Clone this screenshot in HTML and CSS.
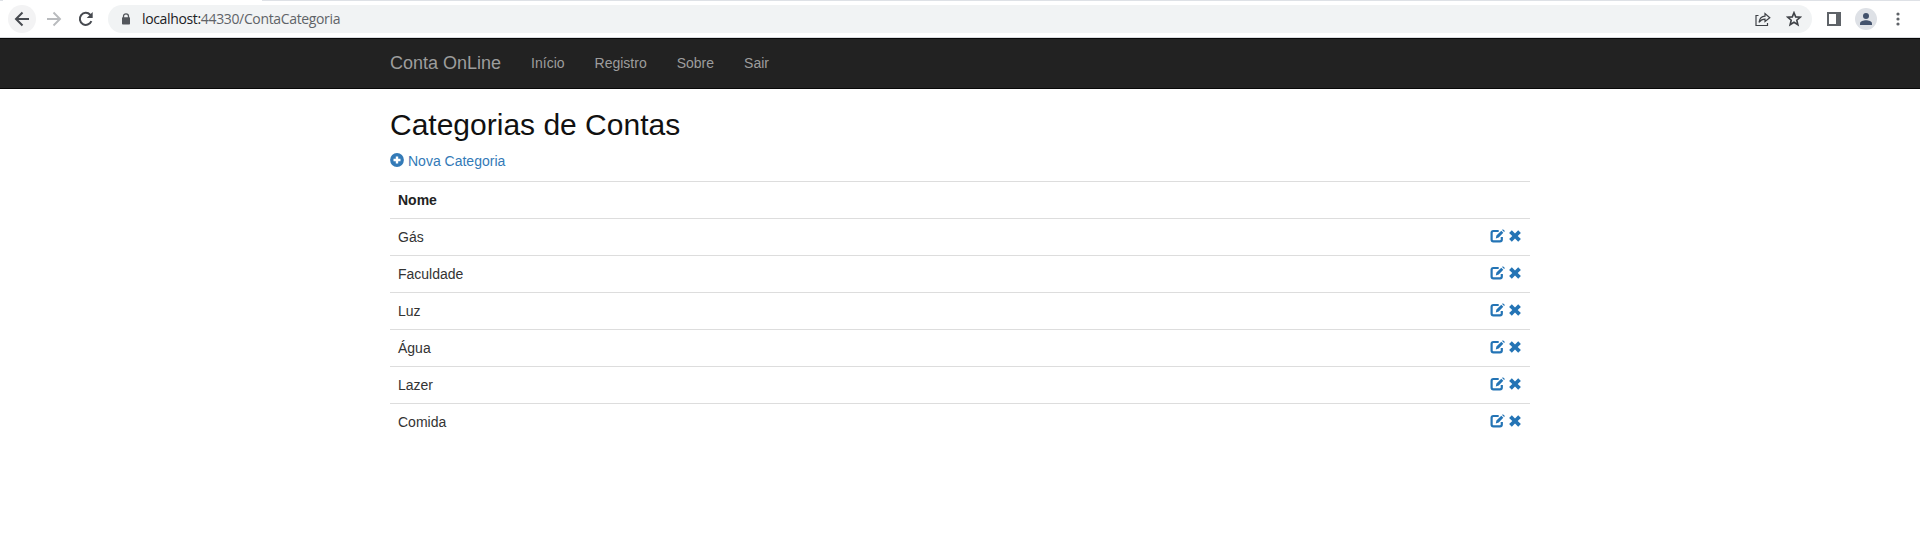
FILE: index.html
```html
<!DOCTYPE html>
<html lang="pt-BR">
<head>
<meta charset="utf-8">
<title>Categorias de Contas</title>
<link rel="stylesheet" href="styles.css">
</head>
<body>
<svg class="symbols" width="0" height="0">
  <symbol id="edit" viewBox="0 0 16 14">
    <path d="M8.700 2H3.400Q1.600 2 1.600 3.800V10.500Q1.600 12.300 3.400 12.300H10Q11.800 12.300 11.800 10.500V8" fill="none" stroke="currentColor" stroke-width="2.200"/>
    <path d="M5.800 9.500 6.400 6.600 11.300 1.700 13.300 3.700 8.700 8.500ZM12.100 1 12.900.2 14.900 2.100 14.100 3Z" fill="currentColor"/>
  </symbol>
  <symbol id="remove" viewBox="0 0 12 12">
    <path d="M2.800.3 6 3.400 9.200.3 11.900 2.900 8.700 6 11.900 9.100 9.200 11.700 6 8.600 2.800 11.700.1 9.100 3.300 6 .1 2.900Z" fill="currentColor"/>
  </symbol>
</svg>
<header class="browser">
  <div class="tab-strip"><span class="active-tab"></span></div>
  <div class="toolbar">
    <span class="back"><svg width="16" height="16" viewBox="0 0 16 16"><path d="M15 8H2.500M8.500 1.500 2 8l6.500 6.500" fill="none" stroke="#474a50" stroke-width="2"/></svg></span>
    <svg class="forward" width="16" height="16" viewBox="0 0 16 16"><path d="M1 8h12.500M7.500 1.500 14 8l-6.500 6.500" fill="none" stroke="#b9bbbe" stroke-width="1.900"/></svg>
    <svg class="reload" width="16" height="16" viewBox="0 0 16 16"><path d="M13.400 10.200A6 6 0 1 1 12.200 3.700L13.200 4.800" fill="none" stroke="#474a50" stroke-width="2"/><path d="M14.700 1v6H8.700Z" fill="#474a50"/></svg>
    <div class="address">
      <svg class="lock" width="10" height="12" viewBox="0 0 10 12"><path d="M2.500 5V3.300a2.500 2.500 0 0 1 5 0V5" fill="none" stroke="#54575c" stroke-width="1.300"/><rect x="1" y="4.300" width="8" height="7.200" rx=".8" fill="#54575c"/></svg>
      <span class="url"><b>localhost:</b>44330/ContaCategoria</span>
      <svg class="share" width="16" height="14" viewBox="0 0 16 14"><path d="M3.500 3.500H1v10h11.500V11M4 10.300C4.500 6.800 6.600 4.300 10 4.100V1.500L14.800 5.700 10 9.500V7.200C7.300 7.200 5.500 8.300 4 10.300Z" fill="none" stroke="#3f4247" stroke-width="1.200"/></svg>
      <svg class="star" width="16" height="16" viewBox="0 0 16 16"><path d="m8 1.700 1.700 4.200 4.600.3-3.500 3 1.100 4.500L8 11.300l-3.900 2.400 1.100-4.500-3.500-3 4.600-.3Z" fill="none" stroke="#3f4247" stroke-width="1.600"/></svg>
    </div>
    <svg class="panel" width="14" height="14" viewBox="0 0 14 14"><path d="M1 1h12v12H1Z" fill="none" stroke="#5f6368" stroke-width="2"/><path d="M9 1h4v12H9Z" fill="#5f6368"/></svg>
    <span class="profile"><svg width="12" height="12" viewBox="0 0 12 12"><circle cx="6" cy="3" r="3" fill="#43526c"/><path d="M0 12v-1.500C0 8.300 3.500 7.300 6 7.300s6 1 6 3.200V12Z" fill="#43526c"/></svg></span>
    <svg class="menu" width="4" height="14" viewBox="0 0 4 14"><g fill="#5f6368"><circle cx="2" cy="2" r="1.600"/><circle cx="2" cy="7" r="1.600"/><circle cx="2" cy="12" r="1.600"/></g></svg>
  </div>
</header>
<nav class="navbar">
  <div class="container nav-row">
    <a class="brand">Conta OnLine</a>
    <a>Início</a><a>Registro</a><a>Sobre</a><a>Sair</a>
  </div>
</nav>
<main class="container">
  <h2>Categorias de Contas</h2>
  <p class="create"><svg width="14" height="14" viewBox="0 0 14 14"><circle cx="7" cy="7" r="6.900" fill="currentColor"/><path d="M7 3.500v7M3.500 7h7" stroke="#fff" stroke-width="2.400"/></svg><a>Nova Categoria</a></p>
  <table>
    <tr><th>Nome</th><th></th></tr>
    <tr><td>Gás</td><td class="actions"><div><svg class="edit"><use href="#edit"/></svg><svg class="remove"><use href="#remove"/></svg></div></td></tr>
    <tr><td>Faculdade</td><td class="actions"><div><svg class="edit"><use href="#edit"/></svg><svg class="remove"><use href="#remove"/></svg></div></td></tr>
    <tr><td>Luz</td><td class="actions"><div><svg class="edit"><use href="#edit"/></svg><svg class="remove"><use href="#remove"/></svg></div></td></tr>
    <tr><td>Água</td><td class="actions"><div><svg class="edit"><use href="#edit"/></svg><svg class="remove"><use href="#remove"/></svg></div></td></tr>
    <tr><td>Lazer</td><td class="actions"><div><svg class="edit"><use href="#edit"/></svg><svg class="remove"><use href="#remove"/></svg></div></td></tr>
    <tr><td>Comida</td><td class="actions"><div><svg class="edit"><use href="#edit"/></svg><svg class="remove"><use href="#remove"/></svg></div></td></tr>
  </table>
</main>
</body>
</html>
```

FILE: styles.css
```css
* { box-sizing: border-box; }
body { margin: 0; background: #fff; color: #333; font: 14px/20px "Liberation Sans", Arial, sans-serif; overflow: hidden; }
svg { display: block; flex: none; }
.symbols { position: absolute; }
.browser { height: 38px; border-bottom: 1px solid #dadce0; }
.tab-strip { height: 1px; background: #dee1e6; padding-left: 3px; }
.active-tab { display: block; width: 259px; height: 1px; background: #fff; }
.toolbar { display: flex; align-items: center; height: 36px; padding: 0 14px 0 8px; }
.back { display: flex; align-items: center; justify-content: center; width: 28px; height: 28px; border-radius: 50%; background: #f3f3f4; }
.forward { margin-left: 10px; }
.reload { margin-left: 16px; }
.address { display: flex; align-items: center; flex: 1; height: 28px; margin-left: 14px; padding: 0 10px 0 13px; border-radius: 14px; background: #f1f3f4; }
.url { margin-left: 11px; color: #5f6368; font: 14px/20px "Open Sans", "Noto Sans", sans-serif; letter-spacing: -.35px; }
.url b { font-weight: 400; color: #202124; }
.share { margin-left: auto; }
.star { margin-left: 15px; }
.panel { margin-left: 15px; }
.profile { display: flex; align-items: center; justify-content: center; width: 22px; height: 22px; margin-left: 14px; border-radius: 50%; background: #dee1e6; }
.menu { margin: 0 6px 0 19px; }
.container { width: 1140px; margin: 0 auto; }
.navbar { height: 51px; background: #222; border: solid #080808; border-width: 1px 0; }
.nav-row { display: flex; align-items: flex-start; color: #9d9d9d; }
.nav-row a { padding: 14px 15px; }
.nav-row .brand { padding-left: 0; font-size: 18px; }
h2 { margin: 19px 0 10px; color: #111; font-size: 30px; line-height: 33px; font-weight: 400; }
.create { display: flex; align-items: flex-start; gap: 4px; margin: 0 0 10px; color: #337ab7; }
.create svg { margin-top: 2px; }
table { width: 100%; border-collapse: separate; border-spacing: 0; }
th, td { height: 37px; padding: 8px; border-top: 1px solid #ddd; text-align: left; }
th { color: #222; }
.actions div { display: flex; justify-content: flex-end; align-items: center; height: 20px; padding: 0 1px 2px 0; gap: 3px; color: #2474b5; }
.edit { width: 16px; height: 14px; }
.remove { width: 12px; height: 12px; }
```
